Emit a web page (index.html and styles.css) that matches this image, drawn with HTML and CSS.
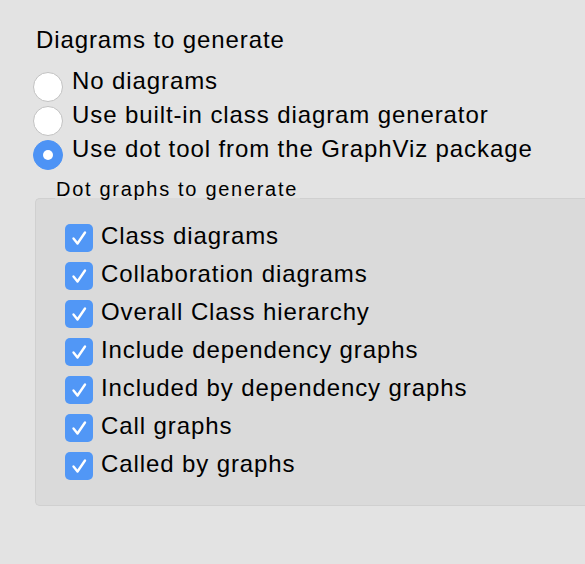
FILE: index.html
```html
<!DOCTYPE html>
<html>
<head>
<meta charset="utf-8">
<link rel="stylesheet" href="styles.css">
</head>
<body>
<div class="panel">
  <div class="title">Diagrams to generate</div>
  <div class="radios">
    <div class="radio-row"><span class="radio"></span><span class="label">No diagrams</span></div>
    <div class="radio-row"><span class="radio"></span><span class="label">Use built-in class diagram generator</span></div>
    <div class="radio-row"><span class="radio checked"><span class="dot"></span></span><span class="label">Use dot tool from the GraphViz package</span></div>
  </div>
  <fieldset class="group">
    <legend class="legend">Dot graphs to generate</legend>
    <div class="check-row"><span class="check"><svg viewBox="0 0 28 28" width="28" height="28"><path d="M8.5 14.5 L12.5 19.5 L20 8.5" fill="none" stroke="#fff" stroke-width="2.4" stroke-linecap="round" stroke-linejoin="round"/></svg></span><span class="label">Class diagrams</span></div>
    <div class="check-row"><span class="check"><svg viewBox="0 0 28 28" width="28" height="28"><path d="M8.5 14.5 L12.5 19.5 L20 8.5" fill="none" stroke="#fff" stroke-width="2.4" stroke-linecap="round" stroke-linejoin="round"/></svg></span><span class="label">Collaboration diagrams</span></div>
    <div class="check-row"><span class="check"><svg viewBox="0 0 28 28" width="28" height="28"><path d="M8.5 14.5 L12.5 19.5 L20 8.5" fill="none" stroke="#fff" stroke-width="2.4" stroke-linecap="round" stroke-linejoin="round"/></svg></span><span class="label">Overall Class hierarchy</span></div>
    <div class="check-row"><span class="check"><svg viewBox="0 0 28 28" width="28" height="28"><path d="M8.5 14.5 L12.5 19.5 L20 8.5" fill="none" stroke="#fff" stroke-width="2.4" stroke-linecap="round" stroke-linejoin="round"/></svg></span><span class="label">Include dependency graphs</span></div>
    <div class="check-row"><span class="check"><svg viewBox="0 0 28 28" width="28" height="28"><path d="M8.5 14.5 L12.5 19.5 L20 8.5" fill="none" stroke="#fff" stroke-width="2.4" stroke-linecap="round" stroke-linejoin="round"/></svg></span><span class="label">Included by dependency graphs</span></div>
    <div class="check-row"><span class="check"><svg viewBox="0 0 28 28" width="28" height="28"><path d="M8.5 14.5 L12.5 19.5 L20 8.5" fill="none" stroke="#fff" stroke-width="2.4" stroke-linecap="round" stroke-linejoin="round"/></svg></span><span class="label">Call graphs</span></div>
    <div class="check-row"><span class="check"><svg viewBox="0 0 28 28" width="28" height="28"><path d="M8.5 14.5 L12.5 19.5 L20 8.5" fill="none" stroke="#fff" stroke-width="2.4" stroke-linecap="round" stroke-linejoin="round"/></svg></span><span class="label">Called by graphs</span></div>
  </fieldset>
</div>
</body>
</html>
```

FILE: styles.css
```css
html, body {
  margin: 0;
  padding: 0;
  overflow: hidden;
  background: #e3e3e3;
}
body {
  width: 585px;
  height: 564px;
  font-family: "Liberation Sans", Arial, sans-serif;
  font-size: 24px;
  letter-spacing: 0.9px;
  color: #000;
}
.panel {
  padding-top: 26px;
}
.title {
  line-height: 28px;
  padding-left: 36px;
}
.radios {
  margin-top: 10px;
  padding-left: 33px;
  display: flex;
  flex-direction: column;
}
.radio-row {
  display: flex;
  align-items: flex-start;
  gap: 9px;
  height: 34px;
  line-height: 34px;
}
.radio {
  box-sizing: border-box;
  width: 30px;
  height: 30px;
  margin-top: 8px;
  border-radius: 50%;
  background: #fff;
  border: 1.5px solid #c2c2c2;
  flex: none;
  display: flex;
  align-items: center;
  justify-content: center;
}
.radio.checked {
  background: #4d93f5;
  border-color: #4d93f5;
}
.dot {
  width: 10px;
  height: 10px;
  border-radius: 50%;
  background: #fff;
}
.group {
  margin: 13px 0 0 35px;
  padding: 0 0 22px 29px;
  border: 1px solid #d0d0d0;
  border-right: none;
  border-radius: 5px 0 0 5px;
  background: #dadada;
  min-width: 0;
}
.legend {
  font-size: 20px;
  letter-spacing: 1.7px;
  line-height: 20px;
  padding: 0 2px 18px 1px;
  margin-left: -10px;
}
.check-row {
  display: flex;
  align-items: flex-start;
  gap: 8px;
  height: 38px;
  line-height: 38px;
}
.check {
  width: 28px;
  height: 28px;
  margin-top: 7px;
  border-radius: 5px;
  background: #5197f6;
  flex: none;
  display: flex;
}
```
